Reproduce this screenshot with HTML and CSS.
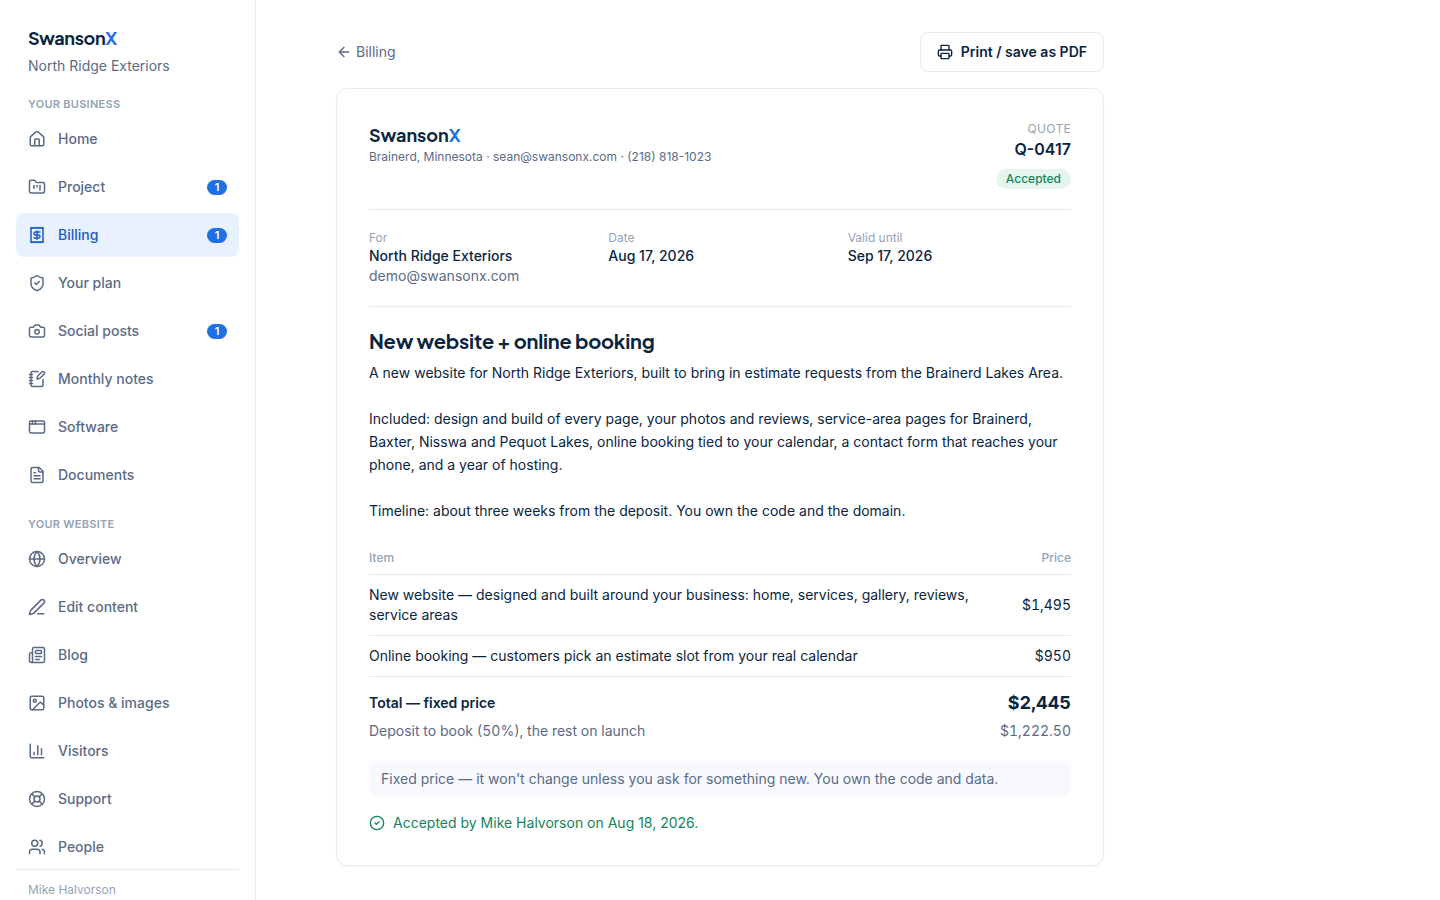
FILE: index.html
```html
<!DOCTYPE html>
<html lang="en">
<head>
    <meta charset="UTF-8">
    <meta name="viewport" content="width=device-width, initial-scale=1.0">
    <title>Quote Q-0417 - SwansonX</title>
    <link rel="stylesheet" href="styles.css">
</head>
<body>
    <aside class="sidebar">
        <div class="sidebar-head">
            <div class="brand brand-tight">Swanson<span>X</span></div>
            <div class="client">North Ridge Exteriors</div>
        </div>
        <nav>
            <h2>Your business</h2>
            <a href="#"><svg viewBox="0 0 24 24"><path d="M15 21v-8a1 1 0 0 0-1-1h-4a1 1 0 0 0-1 1v8"/><path d="M3 10a2 2 0 0 1 .709-1.528l7-5.999a2 2 0 0 1 2.582 0l7 5.999A2 2 0 0 1 21 10v9a2 2 0 0 1-2 2H5a2 2 0 0 1-2-2z"/></svg>Home</a>
            <a href="#"><svg viewBox="0 0 24 24"><path d="M4 20h16a2 2 0 0 0 2-2V8a2 2 0 0 0-2-2h-7.93a2 2 0 0 1-1.66-.9l-.82-1.2A2 2 0 0 0 7.93 3H4a2 2 0 0 0-2 2v13c0 1.1.9 2 2 2Z"/><path d="M8 10v4"/><path d="M12 10v2"/><path d="M16 10v6"/></svg>Project<span class="badge">1</span></a>
            <a href="#" class="selected"><svg viewBox="0 0 24 24"><path d="M4 2v20l2-1 2 1 2-1 2 1 2-1 2 1 2-1 2 1V2l-2 1-2-1-2 1-2-1-2 1-2-1-2 1Z"/><path d="M16 8h-6a2 2 0 1 0 0 4h4a2 2 0 1 1 0 4H8"/><path d="M12 17.5v-11"/></svg>Billing<span class="badge">1</span></a>
            <a href="#"><svg viewBox="0 0 24 24"><path d="M20 13c0 5-3.5 7.5-7.66 8.95a1 1 0 0 1-.67-.01C7.5 20.5 4 18 4 13V6a1 1 0 0 1 1-1c2 0 4.5-1.2 6.24-2.72a1.17 1.17 0 0 1 1.52 0C14.51 3.81 17 5 19 5a1 1 0 0 1 1 1z"/><path d="m9 12 2 2 4-4"/></svg>Your plan</a>
            <a href="#"><svg viewBox="0 0 24 24"><path d="M14.5 4h-5L7 7H4a2 2 0 0 0-2 2v9a2 2 0 0 0 2 2h16a2 2 0 0 0 2-2V9a2 2 0 0 0-2-2h-3l-2.5-3z"/><circle cx="12" cy="13" r="3"/></svg>Social posts<span class="badge">1</span></a>
            <a href="#"><svg viewBox="0 0 24 24"><path d="M13.4 2H6a2 2 0 0 0-2 2v16a2 2 0 0 0 2 2h12a2 2 0 0 0 2-2v-7.4"/><path d="M2 6h4"/><path d="M2 10h4"/><path d="M2 14h4"/><path d="M2 18h4"/><path d="M21.378 5.626a1 1 0 1 0-3.004-3.004l-5.01 5.012a2 2 0 0 0-.506.854l-.837 2.87a.5.5 0 0 0 .62.62l2.87-.837a2 2 0 0 0 .854-.506z"/></svg>Monthly notes</a>
            <a href="#"><svg viewBox="0 0 24 24"><rect x="2" y="4" width="20" height="16" rx="2"/><path d="M10 4v4"/><path d="M2 8h20"/><path d="M6 4v4"/></svg>Software</a>
            <a href="#"><svg viewBox="0 0 24 24"><path d="M15 2H6a2 2 0 0 0-2 2v16a2 2 0 0 0 2 2h12a2 2 0 0 0 2-2V7Z"/><path d="M14 2v4a2 2 0 0 0 2 2h4"/><path d="M10 9H8"/><path d="M16 13H8"/><path d="M16 17H8"/></svg>Documents</a>
            <h2>Your website</h2>
            <a href="#"><svg viewBox="0 0 24 24"><circle cx="12" cy="12" r="10"/><path d="M12 2a14.5 14.5 0 0 0 0 20 14.5 14.5 0 0 0 0-20"/><path d="M2 12h20"/></svg>Overview</a>
            <a href="#"><svg viewBox="0 0 24 24"><path d="M13 21h8"/><path d="M21.174 6.812a1 1 0 0 0-3.986-3.987L3.842 16.174a2 2 0 0 0-.5.83l-1.321 4.352a.5.5 0 0 0 .623.622l4.353-1.32a2 2 0 0 0 .83-.497z"/></svg>Edit content</a>
            <a href="#"><svg viewBox="0 0 24 24"><path d="M15 18h-5"/><path d="M18 14h-8"/><path d="M4 22h16a2 2 0 0 0 2-2V4a2 2 0 0 0-2-2H8a2 2 0 0 0-2 2v16a2 2 0 0 1-4 0v-9a2 2 0 0 1 2-2h2"/><rect width="8" height="4" x="10" y="6" rx="1"/></svg>Blog</a>
            <a href="#"><svg viewBox="0 0 24 24"><rect width="18" height="18" x="3" y="3" rx="2"/><circle cx="9" cy="9" r="2"/><path d="m21 15-3.086-3.086a2 2 0 0 0-2.828 0L6 21"/></svg>Photos &amp; images</a>
            <a href="#"><svg viewBox="0 0 24 24"><path d="M3 3v16a2 2 0 0 0 2 2h16"/><path d="M18 17V9"/><path d="M13 17V5"/><path d="M8 17v-3"/></svg>Visitors</a>
            <a href="#"><svg viewBox="0 0 24 24"><circle cx="12" cy="12" r="10"/><path d="m4.93 4.93 4.24 4.24"/><path d="m14.83 9.17 4.24-4.24"/><path d="m14.83 14.83 4.24 4.24"/><path d="m9.17 14.83-4.24 4.24"/><circle cx="12" cy="12" r="4"/></svg>Support</a>
            <a href="#"><svg viewBox="0 0 24 24"><path d="M16 21v-2a4 4 0 0 0-4-4H6a4 4 0 0 0-4 4v2"/><path d="M16 3.128a4 4 0 0 1 0 7.744"/><path d="M22 21v-2a4 4 0 0 0-3-3.87"/><circle cx="9" cy="7" r="4"/></svg>People</a>
        </nav>
        <div class="user">Mike Halvorson</div>
    </aside>

    <main>
        <div class="page">
            <div class="toolbar">
                <a href="#" class="back"><svg viewBox="0 0 24 24"><path d="m12 19-7-7 7-7"/><path d="M19 12H5"/></svg>Billing</a>
                <button type="button" class="print"><svg viewBox="0 0 24 24"><path d="M6 18H4a2 2 0 0 1-2-2v-5a2 2 0 0 1 2-2h16a2 2 0 0 1 2 2v5a2 2 0 0 1-2 2h-2"/><path d="M6 9V3a1 1 0 0 1 1-1h10a1 1 0 0 1 1 1v6"/><rect x="6" y="14" width="12" height="8" rx="1"/></svg>Print / save as PDF</button>
            </div>

            <article class="quote">
                <header>
                    <div>
                        <div class="brand">Swanson<span>X</span></div>
                        <p class="address">Brainerd, Minnesota · sean@swansonx.com · (218) 818-1023</p>
                    </div>
                    <div class="number">
                        <div class="label">Quote</div>
                        <div class="id">Q-0417</div>
                        <span class="status">Accepted</span>
                    </div>
                </header>

                <dl>
                    <div>
                        <dt>For</dt>
                        <dd>North Ridge Exteriors</dd>
                        <dd class="email">demo@swansonx.com</dd>
                    </div>
                    <div>
                        <dt>Date</dt>
                        <dd>Aug 17, 2026</dd>
                    </div>
                    <div>
                        <dt>Valid until</dt>
                        <dd>Sep 17, 2026</dd>
                    </div>
                </dl>

                <h1>New website + online booking</h1>
                <div class="scope">
                    <p>A new website for North Ridge Exteriors, built to bring in estimate requests from the Brainerd Lakes Area.</p>
                    <p>Included: design and build of every page, your photos and reviews, service-area pages for Brainerd, Baxter, Nisswa and Pequot Lakes, online booking tied to your calendar, a contact form that reaches your phone, and a year of hosting.</p>
                    <p>Timeline: about three weeks from the deposit. You own the code and the domain.</p>
                </div>

                <table>
                    <thead>
                        <tr>
                            <th>Item</th>
                            <th>Price</th>
                        </tr>
                    </thead>
                    <tbody>
                        <tr>
                            <td>New website — designed and built around your business: home, services, gallery, reviews, service areas</td>
                            <td>$1,495</td>
                        </tr>
                        <tr>
                            <td>Online booking — customers pick an estimate slot from your real calendar</td>
                            <td>$950</td>
                        </tr>
                    </tbody>
                </table>

                <div class="total"><span>Total — fixed price</span><strong>$2,445</strong></div>
                <div class="deposit"><span>Deposit to book (50%), the rest on launch</span><span>$1,222.50</span></div>
                <p class="note">Fixed price — it won't change unless you ask for something new. You own the code and data.</p>
                <p class="accepted"><svg viewBox="0 0 24 24"><circle cx="12" cy="12" r="10"/><path d="m9 12 2 2 4-4"/></svg>Accepted by Mike Halvorson on Aug 18, 2026.</p>
            </article>
        </div>
    </main>
</body>
</html>
```
FILE: styles.css
```css
* { box-sizing: border-box; }
body { margin: 0; display: flex; min-height: 100vh; background: #fff; color: #0a2540; font-family: Inter, "Liberation Sans", sans-serif; font-size: 14px; line-height: 20px; }
h1, h2, p, dl, dd { margin: 0; }
a { color: inherit; text-decoration: none; }
svg { width: 18px; height: 18px; flex-shrink: 0; fill: none; stroke: currentColor; stroke-width: 2; stroke-linecap: round; stroke-linejoin: round; }

.brand { font-family: "Plus Jakarta Sans", Inter, sans-serif; font-size: 18px; line-height: 28px; font-weight: 700; }
.brand span { color: #1f6fe5; }
.brand-tight { letter-spacing: -0.02em; }

.sidebar { position: sticky; top: 0; width: 256px; height: 100vh; flex-shrink: 0; display: flex; flex-direction: column; padding: 24px 16px 0; border-right: 1px solid #e6eaf2; overflow: hidden; }
.sidebar-head { padding: 0 12px; }
.client { margin-top: 4px; color: #5b6b85; }
nav { display: flex; flex-direction: column; gap: 4px; margin-top: 20px; }
nav h2 { padding: 0 12px; font-size: 11px; line-height: 17px; font-weight: 600; letter-spacing: 0.025em; text-transform: uppercase; color: #94a3b8; }
nav a + h2 { margin-top: 15px; }
nav a { display: flex; align-items: center; gap: 12px; height: 44px; padding: 0 12px; border-radius: 8px; color: #5b6b85; font-weight: 500; }
nav a:hover { background: #f6f8fc; }
nav a.selected { background: #e9f1fe; color: #1a5bc4; }
.badge { margin-left: auto; width: 20px; border-radius: 8px; background: #1f6fe5; color: #fff; font-size: 11px; line-height: 15px; font-weight: 600; text-align: center; }
.user { flex-shrink: 0; padding: 12px; border-top: 1px solid #e6eaf2; color: #94a3b8; font-size: 12px; line-height: 16px; }

main { flex: 1; min-width: 0; padding: 32px; }
.page { max-width: 1024px; margin: 0 auto; }
.toolbar, .quote { max-width: 768px; }
.toolbar { display: flex; align-items: center; justify-content: space-between; margin-bottom: 16px; }
.toolbar svg { width: 16px; height: 16px; }
.back { display: flex; align-items: center; gap: 4px; color: #5b6b85; }
.print { display: flex; align-items: center; gap: 8px; height: 40px; padding: 0 16px; background: #fff; border: 1px solid #e6eaf2; border-radius: 8px; color: inherit; font: inherit; font-weight: 600; cursor: pointer; }

.quote { padding: 32px; border: 1px solid #e6eaf2; border-radius: 12px; box-shadow: 0 1px 2px rgba(10, 37, 64, 0.04); }
.quote header { display: flex; justify-content: space-between; padding-bottom: 20px; border-bottom: 1px solid #e6eaf2; }
.address { font-size: 12px; line-height: 16px; color: #5b6b85; }
.number { display: flex; flex-direction: column; align-items: flex-end; }
.label { font-size: 12px; line-height: 16px; letter-spacing: 0.025em; text-transform: uppercase; color: #94a3b8; }
.id { font-size: 16px; line-height: 24px; font-weight: 600; }
.status { margin-top: 8px; padding: 0 10px; border-radius: 10px; background: #e6f5ee; color: #14855a; font-size: 12px; line-height: 20px; font-weight: 500; }

dl { display: grid; grid-template-columns: repeat(3, 1fr); gap: 16px; padding: 20px 0; border-bottom: 1px solid #e6eaf2; }
dt { font-size: 12px; line-height: 16px; color: #94a3b8; }
dd { font-weight: 500; }
dd.email { font-weight: 400; color: #5b6b85; }

h1 { margin-top: 20px; font-family: "Plus Jakarta Sans", Inter, sans-serif; font-size: 20px; line-height: 28px; font-weight: 700; letter-spacing: -0.01em; }
.scope { display: grid; gap: 23px; margin-top: 6px; line-height: 23px; }

table { width: 100%; margin-top: 22px; border-collapse: collapse; }
th, td { padding: 10px 0; border-bottom: 1px solid #e6eaf2; text-align: left; }
th { padding: 6px 0 8px; font-size: 12px; line-height: 16px; font-weight: 500; color: #94a3b8; }
th:last-child, td:last-child { padding-left: 16px; text-align: right; }
td:last-child, .total strong, .deposit span { font-variant-numeric: tabular-nums; }

.total, .deposit { display: flex; align-items: center; justify-content: space-between; }
.total { margin-top: 12px; font-weight: 600; }
.total strong { font-size: 18px; line-height: 28px; font-weight: 700; }
.deposit { margin-top: 4px; color: #5b6b85; }
.note { margin-top: 20px; padding: 8px 12px; border-radius: 8px; background: #f7f9fd; color: #5b6b85; }
.accepted { display: flex; align-items: center; gap: 8px; margin-top: 16px; color: #14855a; }
.accepted svg { width: 16px; height: 16px; }

@media (max-width: 800px) { .sidebar { display: none; } main { padding: 16px; } }
```
